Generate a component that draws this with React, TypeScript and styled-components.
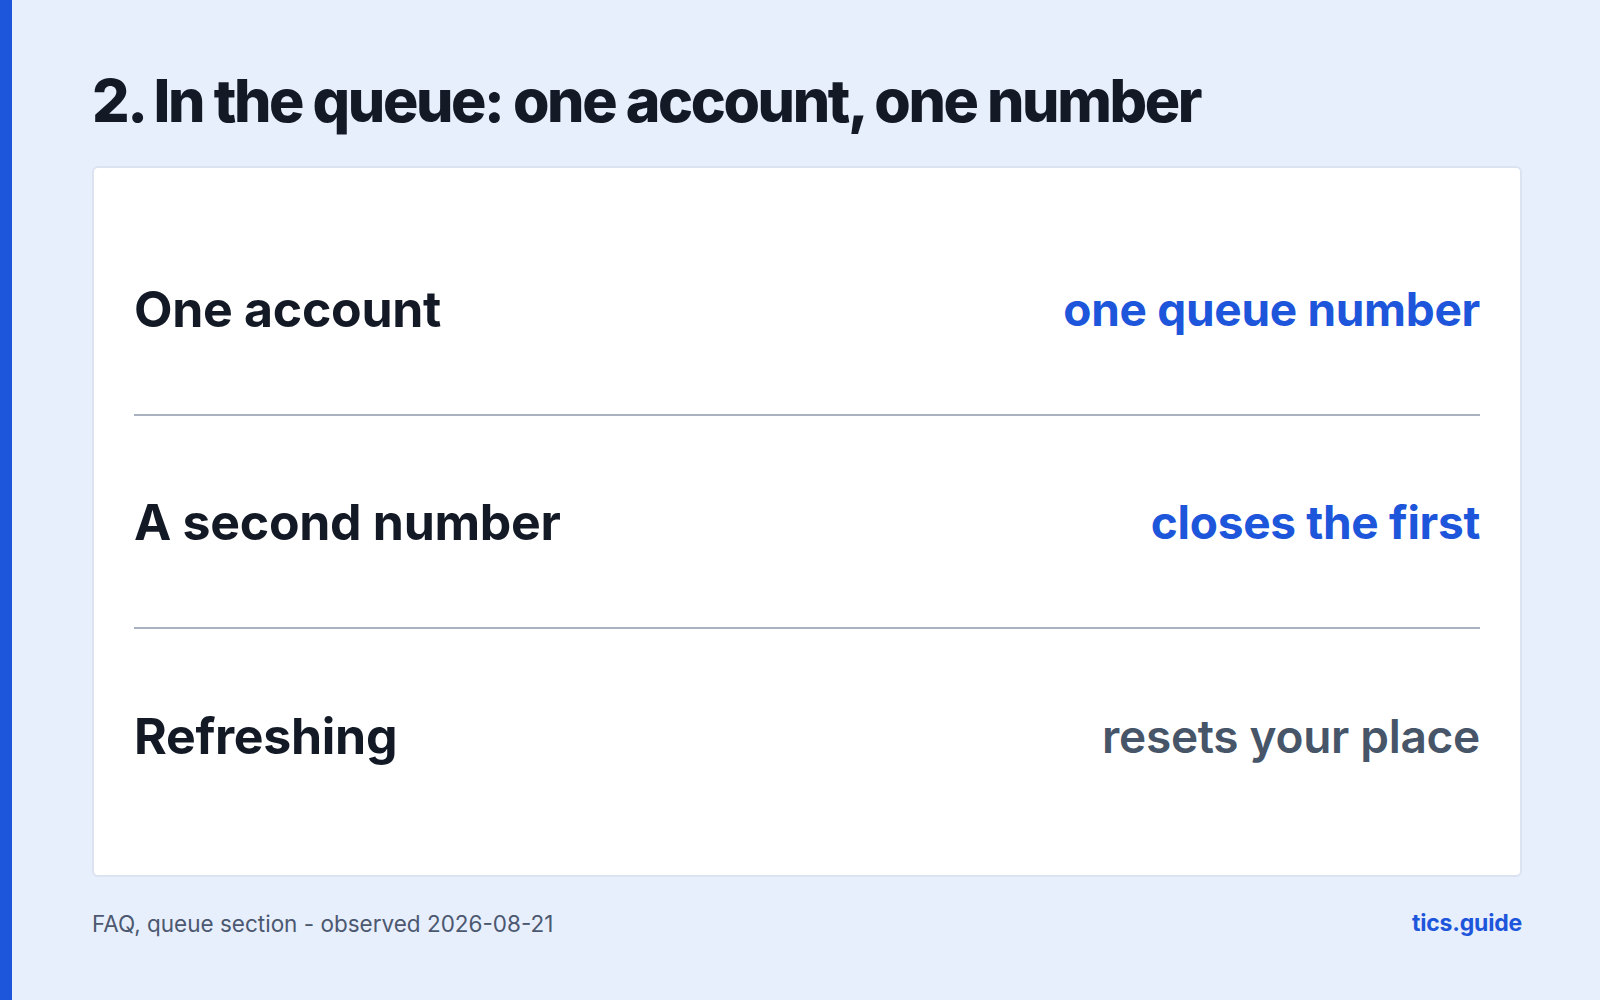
import React from "react";
import styled, { createGlobalStyle } from "styled-components";

const Global = createGlobalStyle`
  html, body { margin: 0; padding: 0; }
  body { background: #e8effc; font-family: Inter, "Noto Sans", sans-serif; }
`;

const Page = styled.div`
  width: 1600px;
  height: 1000px;
  display: flex;
  background: #e8effc;
  overflow: hidden;
`;

const Bar = styled.div`
  width: 12px;
  flex: none;
  background: #1d56db;
`;

const Main = styled.main`
  flex: 1;
  padding: 66px 78px 0 80px;
  display: flex;
  flex-direction: column;
`;

const Title = styled.h1`
  margin: 0;
  font-size: 59px;
  line-height: 70px;
  font-weight: 800;
  letter-spacing: -2.4px;
  color: #131a26;
`;

const Card = styled.section`
  margin-top: 30px;
  background: #ffffff;
  border: 2px solid #dbe3f0;
  border-radius: 6px;
  padding: 35px 40px 33px;
  display: flex;
  flex-direction: column;
`;

const Row = styled.div<{ $last?: boolean }>`
  height: 213px;
  box-sizing: border-box;
  display: flex;
  align-items: center;
  justify-content: space-between;
  border-bottom: ${(p) => (p.$last ? "none" : "2px solid #aab2bf")};
`;

const Label = styled.span`
  font-size: 50px;
  font-weight: 700;
  color: #131a26;
  letter-spacing: -0.3px;
`;

const Value = styled.span<{ $tone: "blue" | "gray" }>`
  font-size: 46px;
  font-weight: ${(p) => (p.$tone === "blue" ? 700 : 600)};
  color: ${(p) => (p.$tone === "blue" ? "#1d56db" : "#475569")};
  letter-spacing: -0.3px;
`;

const Footer = styled.footer`
  margin-top: 32px;
  display: flex;
  justify-content: space-between;
  align-items: center;
`;

const Note = styled.span`
  font-size: 22.5px;
  color: #4b5870;
`;

const Brand = styled.span`
  font-size: 23px;
  font-weight: 700;
  color: #1d56db;
  letter-spacing: -0.2px;
`;

const rows: { label: string; value: string; tone: "blue" | "gray" }[] = [
  { label: "One account", value: "one queue number", tone: "blue" },
  { label: "A second number", value: "closes the first", tone: "blue" },
  { label: "Refreshing", value: "resets your place", tone: "gray" },
];

export default function App() {
  return (
    <>
      <Global />
      <Page>
        <Bar />
        <Main>
          <Title>2. In the queue: one account, one number</Title>
          <Card>
            {rows.map((r, i) => (
              <Row key={r.label} $last={i === rows.length - 1}>
                <Label>{r.label}</Label>
                <Value $tone={r.tone}>{r.value}</Value>
              </Row>
            ))}
          </Card>
          <Footer>
            <Note>FAQ, queue section - observed 2026-08-21</Note>
            <Brand>tics.guide</Brand>
          </Footer>
        </Main>
      </Page>
    </>
  );
}
